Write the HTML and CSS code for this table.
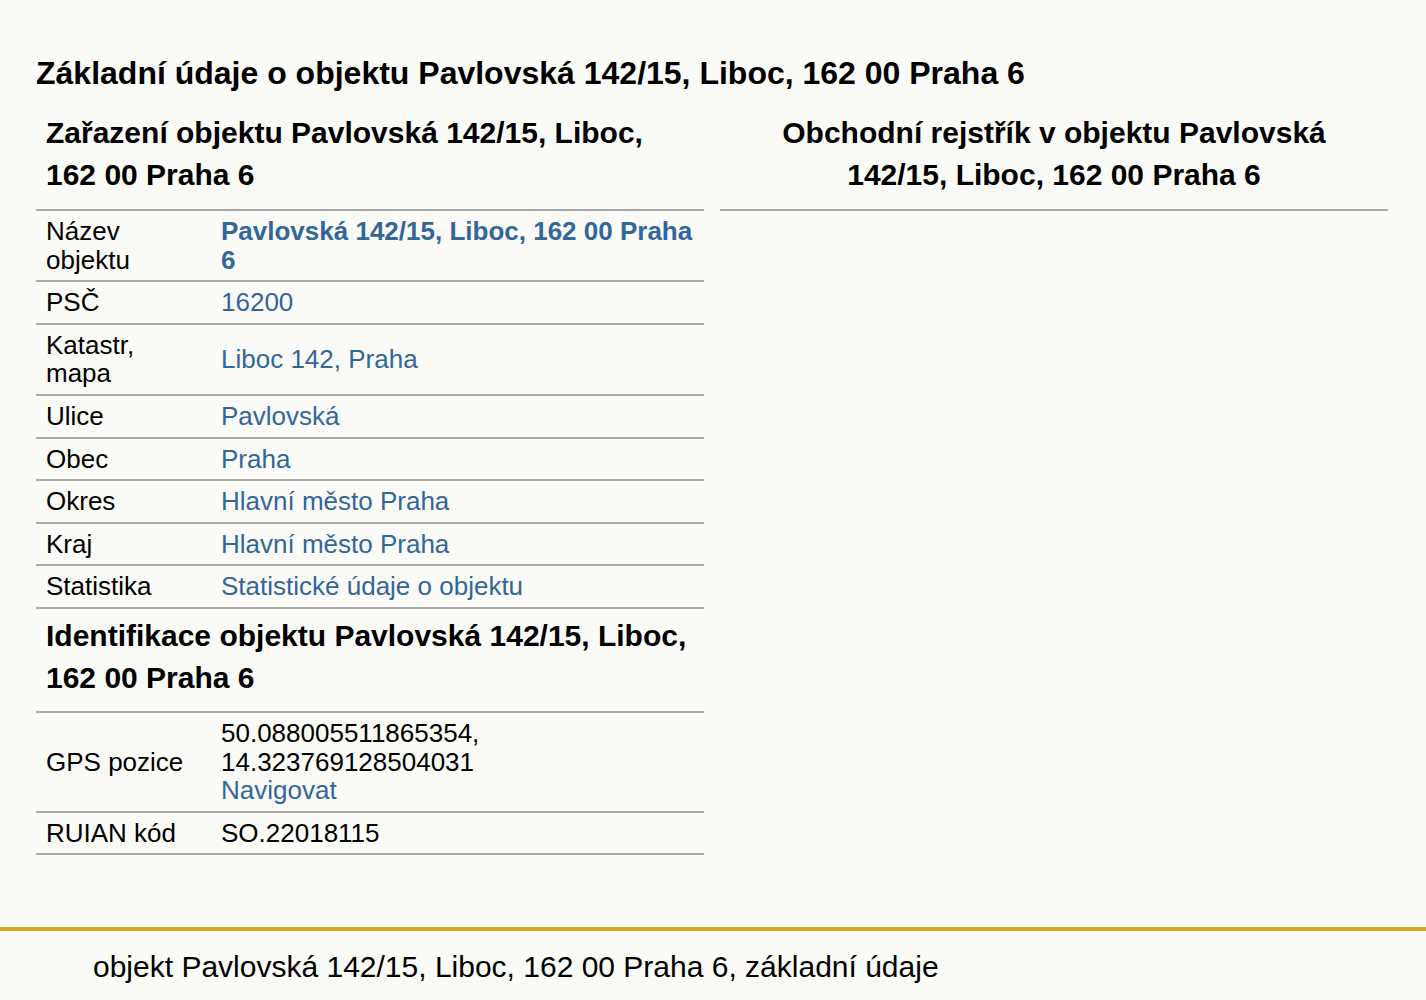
FILE: index.html
```html
<!DOCTYPE html>
<html lang="cs">
<head>
<meta charset="utf-8">
<title>Pavlovská 142/15, Liboc, 162 00 Praha 6</title>
<link rel="stylesheet" href="styles.css">
</head>
<body>
<main class="content">
  <h1 class="title">Základní údaje o objektu Pavlovská 142/15, Liboc, 162 00 Praha 6</h1>
  <div class="columns">
    <section class="col">
      <h2 class="sec-head">Zařazení objektu Pavlovská 142/15, Liboc, 162 00 Praha 6</h2>
      <table class="info">
        <colgroup><col class="lbl-col"><col></colgroup>
        <tr><td class="lbl">Název objektu</td><td class="val"><a class="strong" href="#">Pavlovská 142/15, Liboc, 162 00 Praha 6</a></td></tr>
        <tr><td class="lbl">PSČ</td><td class="val"><a href="#">16200</a></td></tr>
        <tr><td class="lbl">Katastr, mapa</td><td class="val"><a href="#">Liboc 142, Praha</a></td></tr>
        <tr><td class="lbl">Ulice</td><td class="val"><a href="#">Pavlovská</a></td></tr>
        <tr><td class="lbl">Obec</td><td class="val"><a href="#">Praha</a></td></tr>
        <tr><td class="lbl">Okres</td><td class="val"><a href="#">Hlavní město Praha</a></td></tr>
        <tr><td class="lbl">Kraj</td><td class="val"><a href="#">Hlavní město Praha</a></td></tr>
        <tr><td class="lbl">Statistika</td><td class="val"><a href="#">Statistické údaje o objektu</a></td></tr>
      </table>
      <h2 class="sec-head">Identifikace objektu Pavlovská 142/15, Liboc, 162 00 Praha 6</h2>
      <table class="info">
        <colgroup><col class="lbl-col"><col></colgroup>
        <tr><td class="lbl">GPS pozice</td><td class="val">50.088005511865354, 14.323769128504031<br><a href="#">Navigovat</a></td></tr>
        <tr><td class="lbl">RUIAN kód</td><td class="val">SO.22018115</td></tr>
      </table>
    </section>
    <section class="col">
      <h2 class="sec-head center">Obchodní rejstřík v objektu Pavlovská 142/15, Liboc, 162 00 Praha 6</h2>
    </section>
  </div>
</main>
<footer class="foot">
  <p class="foot-text">objekt Pavlovská 142/15, Liboc, 162 00 Praha 6, základní údaje</p>
</footer>
</body>
</html>
```
FILE: styles.css
```css
html, body {
  margin: 0;
  padding: 0;
  background: #fafaf7;
  color: #000;
  font-family: "Liberation Sans", Arial, sans-serif;
}
.content {
  padding: 52px 38px 72px 36px;
}
.title {
  margin: 0 0 18px 0;
  font-size: 32px;
  line-height: 42px;
  font-weight: bold;
}
.columns {
  display: grid;
  grid-template-columns: 1fr 1fr;
  column-gap: 16px;
}
.col {
  min-width: 0;
}
.sec-head {
  margin: 0;
  padding: 0 10px 13px 10px;
  font-size: 30px;
  line-height: 42px;
  font-weight: bold;
  border-bottom: 2px solid #aaa;
}
.sec-head.center {
  text-align: center;
}
.info {
  width: 100%;
  table-layout: fixed;
  border-collapse: collapse;
  font-size: 26px;
  line-height: 28.6px;
}
.info .lbl-col {
  width: 175px;
}
.info td {
  padding: 6px 10px;
  border-bottom: 2px solid #aaa;
  vertical-align: middle;
}
.info a {
  color: #336699;
  text-decoration: none;
}
.info a.strong {
  font-weight: bold;
}
.info + .sec-head {
  padding-top: 6px;
  padding-bottom: 12px;
}
.foot {
  border-top: 4px solid #dba628;
}
.foot-text {
  margin: 0;
  padding: 15px 0 30px 93px;
  font-size: 30px;
  line-height: 42px;
}
```
